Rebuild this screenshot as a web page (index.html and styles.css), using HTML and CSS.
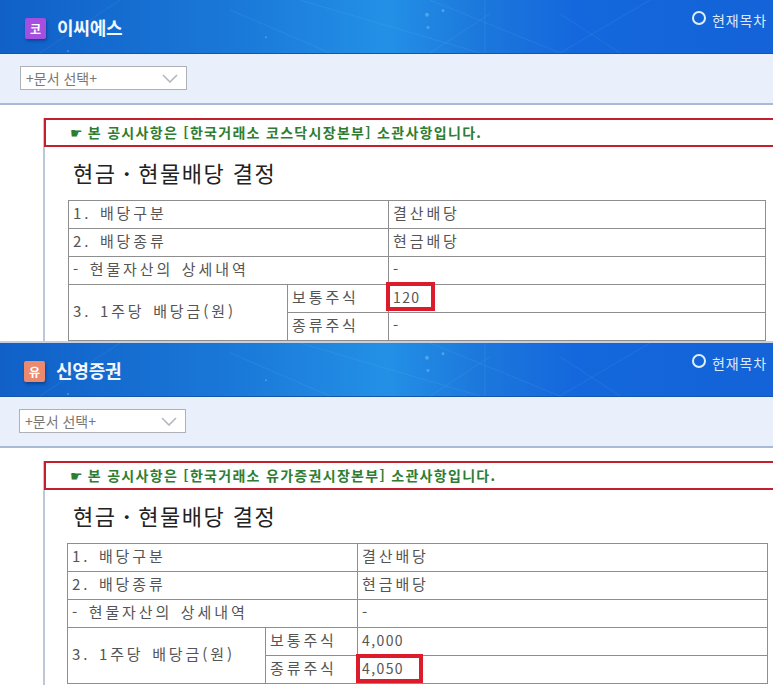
FILE: index.html
```html
<!DOCTYPE html>
<html lang="ko">
<head>
<meta charset="utf-8">
<title>공시</title>
<link rel="stylesheet" href="styles.css">
</head>
<body>
<section class="panel panel-a">
  <header class="top">
    <svg class="net" viewBox="0 0 773 54" preserveAspectRatio="none" aria-hidden="true">
      <g stroke="#8fc8f5" stroke-opacity=".12" fill="none"><path d="M300 0L480 54M430 0L560 54M490 14L430 54M485 0V54M650 0L560 54M120 0L40 54M230 10L330 54M560 14L620 54"/></g>
      <g fill="#a9dcff" fill-opacity=".35"><circle cx="427" cy="15" r="2"/><circle cx="443" cy="11" r="1.5"/><circle cx="428" cy="28" r="1.5"/><circle cx="266" cy="38" r="1"/><circle cx="68" cy="52" r="1"/></g>
    </svg>
    <div class="brand"><span class="badge badge-k">코</span><h1>이씨에스</h1></div>
    <div class="toc"><span class="ring"></span>현재목차</div>
  </header>
  <div class="tools">
    <div class="select"><span>+문서 선택+</span><svg class="chev" viewBox="0 0 16 9" aria-hidden="true"><path d="M1 1l7 7 7-7" fill="none" stroke="#b4b8bd" stroke-width="1.6"/></svg></div>
  </div>
  <div class="doc">
    <p class="notice"><span class="hand">☛</span> 본 공시사항은 [한국거래소 코스닥시장본부] 소관사항입니다.</p>
    <h2>현금<b class="dot">ㆍ</b>현물배당 결정</h2>
    <table class="grid grid-a">
      <colgroup><col class="c1"><col class="c2"><col></colgroup>
      <tr><td colspan="2">1. 배당구분</td><td>결산배당</td></tr>
      <tr><td colspan="2">2. 배당종류</td><td>현금배당</td></tr>
      <tr><td colspan="2">- 현물자산의 상세내역</td><td>-</td></tr>
      <tr><td rowspan="2">3. 1주당 배당금(원)</td><td>보통주식</td><td class="marked num"><span class="mark mark-a"></span>120</td></tr>
      <tr><td>종류주식</td><td>-</td></tr>
    </table>
  </div>
</section>
<section class="panel panel-b">
  <header class="top">
    <svg class="net" viewBox="0 0 773 54" preserveAspectRatio="none" aria-hidden="true">
      <g stroke="#8fc8f5" stroke-opacity=".12" fill="none"><path d="M300 0L480 54M430 0L560 54M490 14L430 54M485 0V54M650 0L560 54M120 0L40 54M230 10L330 54M560 14L620 54"/></g>
      <g fill="#a9dcff" fill-opacity=".35"><circle cx="427" cy="15" r="2"/><circle cx="443" cy="11" r="1.5"/><circle cx="428" cy="28" r="1.5"/><circle cx="266" cy="38" r="1"/><circle cx="68" cy="52" r="1"/></g>
    </svg>
    <div class="brand"><span class="badge badge-y">유</span><h1>신영증권</h1></div>
    <div class="toc"><span class="ring"></span>현재목차</div>
  </header>
  <div class="tools">
    <div class="select"><span>+문서 선택+</span><svg class="chev" viewBox="0 0 16 9" aria-hidden="true"><path d="M1 1l7 7 7-7" fill="none" stroke="#b4b8bd" stroke-width="1.6"/></svg></div>
  </div>
  <div class="doc">
    <p class="notice"><span class="hand">☛</span> 본 공시사항은 [한국거래소 유가증권시장본부] 소관사항입니다.</p>
    <h2>현금<b class="dot">ㆍ</b>현물배당 결정</h2>
    <table class="grid grid-b">
      <colgroup><col class="c1"><col class="c2"><col></colgroup>
      <tr><td colspan="2">1. 배당구분</td><td>결산배당</td></tr>
      <tr><td colspan="2">2. 배당종류</td><td>현금배당</td></tr>
      <tr><td colspan="2">- 현물자산의 상세내역</td><td>-</td></tr>
      <tr><td rowspan="2">3. 1주당 배당금(원)</td><td>보통주식</td><td class="num">4,000</td></tr>
      <tr><td>종류주식</td><td class="marked num"><span class="mark mark-b"></span>4,050</td></tr>
    </table>
  </div>
</section>
</body>
</html>
```
FILE: styles.css
```css
* { box-sizing: border-box; }
html, body { margin: 0; padding: 0; background: #fff; overflow: hidden; }
body { width: 773px; height: 685px; font-family: "Noto Sans CJK KR", "Noto Sans", sans-serif; }
.panel { overflow: hidden; background: #fff; }
.panel-a { height: 343px; border-bottom: 2px solid #c4d0de; }
.panel-b { height: 342px; }
.top { position: relative; height: 54px; display: flex; align-items: center; justify-content: space-between;
  background: linear-gradient(90deg, #1060c8 0%, #1a78d8 30%, #2390e6 50%, #1c78dc 62%, #1467dc 75%, #1463d8 100%);
  border-bottom: 1px solid #1456a8; padding: 0 6px 0 25px; }
.panel-b .top { padding: 0 6px 0 24px; }
.net { position: absolute; inset: 0; width: 100%; height: 100%; }
.brand { position: relative; display: flex; align-items: center; gap: 11px; margin-top: 3px; }
.badge { width: 21px; height: 21px; border-radius: 2px; color: #fff; font-size: 12px; font-weight: 700; line-height: 21px; text-align: center; box-shadow: 1px 2px 3px rgba(0,30,90,.45); }
.badge-k { background: #a54fe0; }
.badge-y { background: #ec8a70; }
h1 { margin: 0 0 2px; color: #f2f7fd; font-size: 18px; font-weight: 700; line-height: 22px; letter-spacing: -.2px; }
.toc { position: relative; display: flex; align-items: center; gap: 6px; color: #dce9f8; font-size: 14px; letter-spacing: .9px; margin-bottom: 14px; }
.ring { width: 14px; height: 14px; border: 2.5px solid #dff0fb; border-radius: 50%; margin-bottom: 4px; }
.tools { height: 51px; padding: 12px 20px 0; background: #e9f0fb; border-bottom: 2px solid #a9bad4; }
.panel-b .tools { padding-left: 19px; }
.select { width: 167px; height: 24px; display: flex; align-items: center; justify-content: space-between; padding: 0 8px 0 5px; background: #fff; border: 1px solid #aeb1b5; color: #777; font-size: 14px; }
.chev { width: 16px; height: 9px; }
.doc { margin: 13px 0 0 43px; border-left: 2px solid #bcc8da; height: 240px; }
.notice { margin: 0 0 0 -1px; height: 29px; padding-left: 24px; border: 2px solid #c2202e; border-right: 0; color: #2e7d32; font-size: 14px; font-weight: 700; line-height: 24px; letter-spacing: 1.3px; white-space: nowrap; }
.hand { font-family: "DejaVu Sans", sans-serif; font-size: 14px; font-weight: 400; letter-spacing: 0; }
h2 { margin: 10px 0 13px 28px; color: #222; font-size: 22px; line-height: 30px; font-weight: 400; letter-spacing: 1.5px; }
.dot { font-weight: 700; }
.grid { border-collapse: collapse; table-layout: fixed; margin-left: 23px; color: #555; font-size: 15px; letter-spacing: 2.9px; word-spacing: 1.5px; }
.grid-a { width: 698px; }
.grid-b { width: 701px; margin-left: 22px; }
.grid-a .c1 { width: 219px; }
.grid-a .c2 { width: 101px; }
.grid-b .c1 { width: 198px; }
.grid-b .c2 { width: 92px; }
.grid td { border: 1px solid #8e8e8e; height: 28px; padding: 0 3px 4px 4px; line-height: 22px; white-space: nowrap; }
.grid td.num { font-size: 14px; letter-spacing: 1.4px; }
.marked { position: relative; }
.mark { position: absolute; border: 4px solid #dc1c2c; }
.mark-a { left: -3px; top: -3px; width: 49px; height: 29px; }
.mark-b { left: -2px; top: -2px; width: 67px; height: 29px; }
```
